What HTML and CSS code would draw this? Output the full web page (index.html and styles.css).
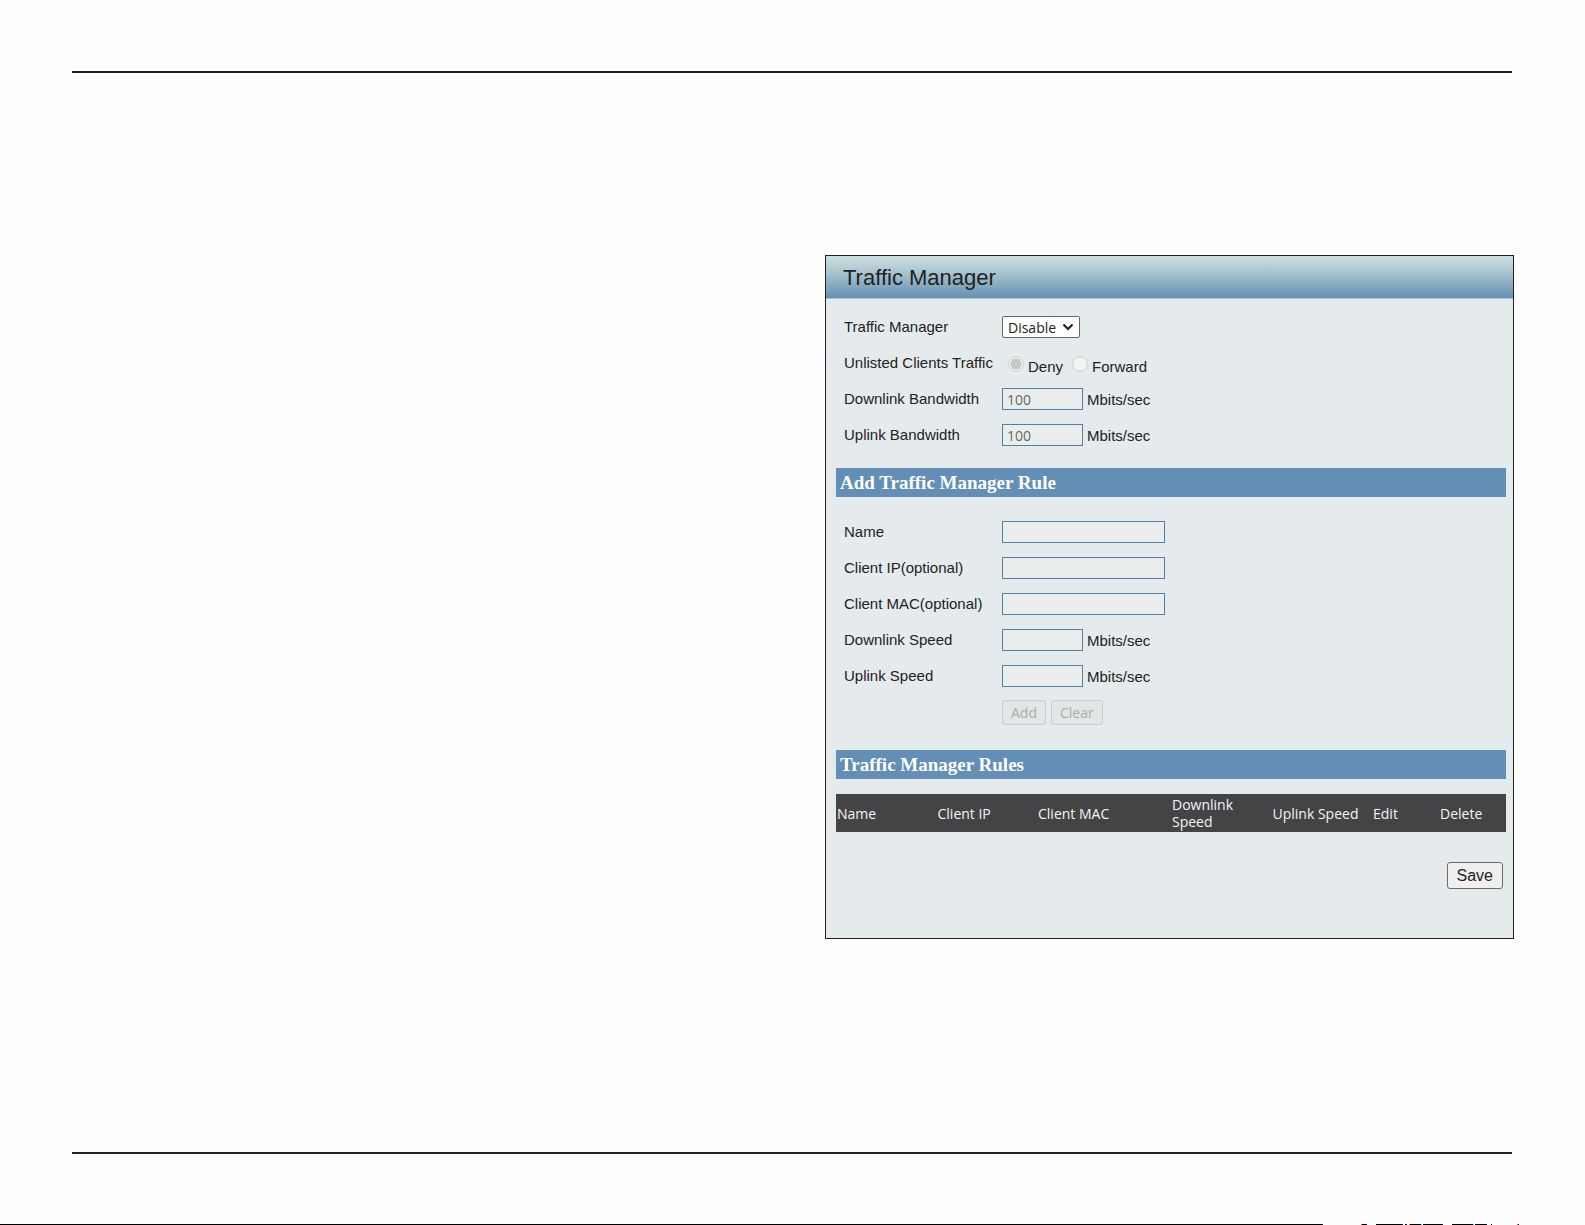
FILE: index.html
```html
<!DOCTYPE html>
<html lang="en">
<head>
<meta charset="utf-8">
<title>Traffic Manager</title>
<link rel="stylesheet" href="styles.css">
</head>
<body>
<div class="page">
  <div class="sheet">
    <main class="panel">
      <h1 class="panel-title">Traffic Manager</h1>
      <form class="panel-body">
        <div class="fields">
          <div class="row">
            <label class="name" for="tm">Traffic Manager</label>
            <select id="tm" class="select"><option>Disable</option><option>Enable</option></select>
          </div>
          <div class="row" role="radiogroup" aria-labelledby="unlisted">
            <span class="name" id="unlisted">Unlisted Clients Traffic</span>
            <div class="choices">
              <label class="choice"><input class="radio" type="radio" name="unlisted" checked disabled><span class="choice-text">Deny</span></label>
              <label class="choice"><input class="radio" type="radio" name="unlisted" disabled><span class="choice-text">Forward</span></label>
            </div>
          </div>
          <div class="row">
            <label class="name" for="down-bw">Downlink Bandwidth</label>
            <input id="down-bw" class="input short" type="text" value="100" disabled>
            <span class="unit">Mbits/sec</span>
          </div>
          <div class="row">
            <label class="name" for="up-bw">Uplink Bandwidth</label>
            <input id="up-bw" class="input short" type="text" value="100" disabled>
            <span class="unit">Mbits/sec</span>
          </div>
        </div>

        <h2 class="section">Add Traffic Manager Rule</h2>
        <div class="fields">
          <div class="row">
            <label class="name" for="rule-name">Name</label>
            <input id="rule-name" class="input" type="text" disabled>
          </div>
          <div class="row">
            <label class="name" for="rule-ip">Client IP(optional)</label>
            <input id="rule-ip" class="input" type="text" disabled>
          </div>
          <div class="row">
            <label class="name" for="rule-mac">Client MAC(optional)</label>
            <input id="rule-mac" class="input" type="text" disabled>
          </div>
          <div class="row">
            <label class="name" for="rule-down">Downlink Speed</label>
            <input id="rule-down" class="input short" type="text" disabled>
            <span class="unit">Mbits/sec</span>
          </div>
          <div class="row">
            <label class="name" for="rule-up">Uplink Speed</label>
            <input id="rule-up" class="input short" type="text" disabled>
            <span class="unit">Mbits/sec</span>
          </div>
          <div class="row">
            <span class="name"></span>
            <div class="buttons">
              <button class="button" type="button" disabled>Add</button>
              <button class="button" type="button" disabled>Clear</button>
            </div>
          </div>
        </div>

        <h2 class="section section-rules">Traffic Manager Rules</h2>
        <table class="rules">
          <colgroup>
            <col class="col-m"><col class="col-m"><col class="col-l"><col class="col-m"><col class="col-m"><col class="col-s"><col class="col-s">
          </colgroup>
          <thead>
            <tr>
              <th>Name</th><th>Client IP</th><th>Client MAC</th><th>Downlink Speed</th><th>Uplink Speed</th><th>Edit</th><th>Delete</th>
            </tr>
          </thead>
        </table>
        <div class="actions"><button class="button save" type="button">Save</button></div>
      </form>
    </main>
  </div>
  <svg class="edge" viewBox="0 0 1585 1" preserveAspectRatio="none" aria-hidden="true" shape-rendering="crispEdges">
    <path d="M0 0h1322v1H0zM1362 0h4v1h-4zM1376 0h26v1h-26zM1405 0h1v1h-1zM1410 0h11v1h-11zM1423 0h19v1h-19zM1452 0h21v1h-21zM1475 0h11v1h-11zM1491 0h1v1h-1z"/>
    <path fill="#00f" d="M1322 0h1v1h-1zM1366 0h1v1h-1zM1402 0h1v1h-1zM1406 0h1v1h-1zM1442 0h1v1h-1zM1486 0h1v1h-1zM1518 0h1v1h-1z"/>
    <path fill="#f60" d="M1361 0h1v1h-1zM1409 0h1v1h-1zM1517 0h1v1h-1z"/>
    <path fill="#0ff" d="M1421 0h1v1h-1zM1473 0h1v1h-1z"/>
  </svg>
</div>
</body>
</html>
```
FILE: styles.css
```css
* {
  box-sizing: border-box;
}

body {
  margin: 0;
  background: #fefefe;
  color: #222;
  font-family: "Liberation Sans", Arial, sans-serif;
  font-size: 15px;
}

.page {
  display: flex;
  flex-direction: column;
  min-height: 100vh;
  padding-top: 71px;
}

.sheet {
  display: grid;
  grid-template-columns: 753fr 687fr;
  flex: 1;
  align-items: start;
  margin: 0 73px 70px 72px;
  padding: 182px 0;
  border-top: 2px solid #231f20;
  border-bottom: 2px solid #231f20;
}

.panel {
  grid-column: 2;
  margin-right: -2px;
  border: 1px solid #231f20;
  background: #e5ebed;
}

.panel-title {
  margin: 0;
  padding: 2px 17px 0;
  border-bottom: 1px solid #a9c6d3;
  background: linear-gradient(#d0dfe0, #a8c4ce 40%, #6590b1);
  font-size: 22px;
  font-weight: 400;
  line-height: 40px;
}

.panel-body {
  padding: 10px 7px 49px 10px;
}

.fields {
  padding: 0 8px;
}

.row {
  display: flex;
  align-items: center;
  height: 36px;
}

.name {
  flex: none;
  width: 158px;
  padding-bottom: 2px;
}

.select {
  appearance: none;
  width: 78px;
  height: 22px;
  padding: 0 5px;
  border: 1px solid #666;
  border-radius: 2px;
  background: #fff url("data:image/svg+xml,%3Csvg xmlns='http://www.w3.org/2000/svg' width='12' height='8'%3E%3Cpath d='M1.5 1.5 6 6l4.500-4.500' fill='none' stroke='%23222' stroke-width='2.200'/%3E%3C/svg%3E") no-repeat right 5px center;
  color: #222;
  font: 14px "Open Sans", Tahoma, sans-serif;
}

.choices {
  display: flex;
  gap: 9px;
  padding: 2px 0 0 6px;
}

.choice {
  display: flex;
  align-items: center;
  gap: 4px;
}

.choice-text {
  padding-top: 4px;
}

.radio {
  appearance: none;
  width: 16px;
  height: 16px;
  margin: 0;
  border: 1px solid #cfd1d1;
  border-radius: 50%;
  background: #f2f3f3;
}

.radio:checked {
  background: radial-gradient(circle, #c6c8c8 5px, #f0f1f1 6px);
}

.input {
  width: 163px;
  height: 22px;
  padding: 0 4px;
  border: 1px solid #4f80a8;
  background: #e9eeec;
  color: #666;
  font: 14px "Open Sans", Tahoma, sans-serif;
}

.short {
  width: 81px;
}

.unit {
  padding-left: 4px;
}

.section {
  margin: 15px 0 17px;
  padding: 0 4px;
  background: #638fb6;
  color: #fff;
  font: bold 19px/29px "Liberation Serif", "Times New Roman", serif;
}

.section-rules {
  margin: 20px 0 15px;
}

.buttons {
  display: flex;
  gap: 5px;
}

.button {
  height: 25px;
  padding: 0 8px;
  border: 1px solid #6c6c6c;
  border-radius: 3px;
  background: #efefef;
  color: #222;
  font: 14px "Open Sans", Tahoma, sans-serif;
}

.button:disabled {
  border-color: #c8cccd;
  background: #e2e6e7;
  color: #a9adae;
}

.rules {
  width: 100%;
  border-collapse: collapse;
  table-layout: fixed;
  background: #444446;
  color: #f4f4f4;
}

.rules th {
  height: 38px;
  padding: 1px;
  font: 14px/17px "Open Sans", Tahoma, sans-serif;
  text-align: left;
}

.col-s {
  width: 10%;
}

.col-m {
  width: 15%;
}

.col-l {
  width: 20%;
}

.actions {
  display: flex;
  justify-content: flex-end;
  padding: 30px 3px 0;
}

.save {
  height: 27px;
  padding: 0 9px;
  font: 16px "Liberation Sans", Arial, sans-serif;
}

.edge {
  display: block;
  width: 100%;
  height: 1px;
}
```
